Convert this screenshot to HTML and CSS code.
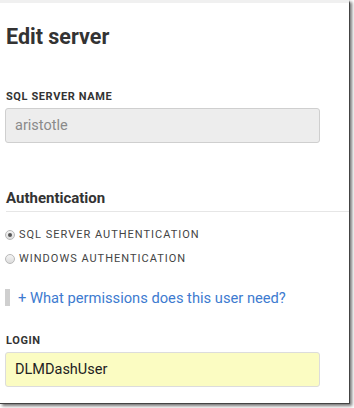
FILE: index.html
```html
<!DOCTYPE html>
<html>
<head>
<meta charset="utf-8">
<link rel="stylesheet" href="styles.css">
</head>
<body>
<div class="frame">
  <h1 class="title">Edit server</h1>
  <div class="field">
    <label class="label">SQL SERVER NAME</label>
    <div class="input input-disabled">aristotle</div>
  </div>
  <h2 class="section">Authentication</h2>
  <div class="radios">
    <div class="radio-row"><span class="radio checked"></span><span class="radio-text">SQL SERVER AUTHENTICATION</span></div>
    <div class="radio-row"><span class="radio"></span><span class="radio-text">WINDOWS AUTHENTICATION</span></div>
  </div>
  <div class="help"><span class="help-bar"></span><a class="help-link">+ What permissions does this user need?</a></div>
  <div class="field login">
    <label class="label">LOGIN</label>
    <div class="input input-filled">DLMDashUser</div>
  </div>
</div>
</body>
</html>
```

FILE: styles.css
```css
html, body {
  margin: 0;
  padding: 0;
  background: #ffffff;
}
body {
  width: 354px;
  height: 408px;
  overflow: hidden;
  font-family: Roboto, "Liberation Sans", sans-serif;
  color: #333;
}
.frame {
  box-sizing: border-box;
  width: 350px;
  height: 404px;
  border-top: 3px solid #f0f0f0;
  border-right: 1px solid #444;
  border-bottom: 1px solid #444;
  box-shadow: 2px 2px 3px rgba(0,0,0,0.55);
  background: #fff;
  padding: 0 0 0 5px;
}
.title {
  margin: 21px 0 0 1px;
  font-size: 21.5px;
  line-height: 26px;
  font-weight: 700;
  color: #333;
}
.field {
  margin-top: 40px;
  margin-right: 29px;
}
.label {
  display: block;
  font-size: 11px;
  line-height: 13px;
  font-weight: 700;
  letter-spacing: 0.6px;
  color: #333;
  padding-left: 1px;
}
.input {
  box-sizing: border-box;
  margin-top: 5px;
  height: 35px;
  border: 1px solid #cfcfcf;
  border-radius: 3px;
  padding: 0 9px;
  font-size: 14.5px;
  line-height: 33px;
}
.input-disabled {
  background: #ededed;
  color: #8a8a8a;
}
.input-filled {
  background: #fbfcc2;
  border-color: #dcdcdc;
  color: #222;
}
.section {
  margin: 46px 0 0 1px;
  font-size: 15px;
  line-height: 18px;
  font-weight: 700;
  color: #333;
  padding-bottom: 4px;
  border-bottom: 1px solid #e6e6e6;
}
.radios {
  margin-top: 16px;
  display: flex;
  flex-direction: column;
  gap: 11px;
}
.radio-row {
  display: flex;
  align-items: center;
  gap: 4px;
  height: 13px;
}
.radio {
  box-sizing: border-box;
  width: 10px;
  height: 10px;
  border-radius: 50%;
  border: 1px solid #b8b8b8;
  background: linear-gradient(#f4f4f4, #dcdcdc);
  position: relative;
}
.radio.checked::after {
  content: "";
  position: absolute;
  left: 2px;
  top: 2px;
  width: 4px;
  height: 4px;
  border-radius: 50%;
  background: #555;
}
.radio-text {
  font-size: 11px;
  letter-spacing: 1px;
  color: #444;
}
.help {
  margin-top: 24px;
  display: flex;
  align-items: center;
  gap: 8px;
  height: 17px;
}
.help-bar {
  width: 5px;
  height: 17px;
  background: #cfcfcf;
}
.help-link {
  font-size: 14.7px;
  color: #3d7bd0;
}
.login {
  margin-top: 28px;
}
```
